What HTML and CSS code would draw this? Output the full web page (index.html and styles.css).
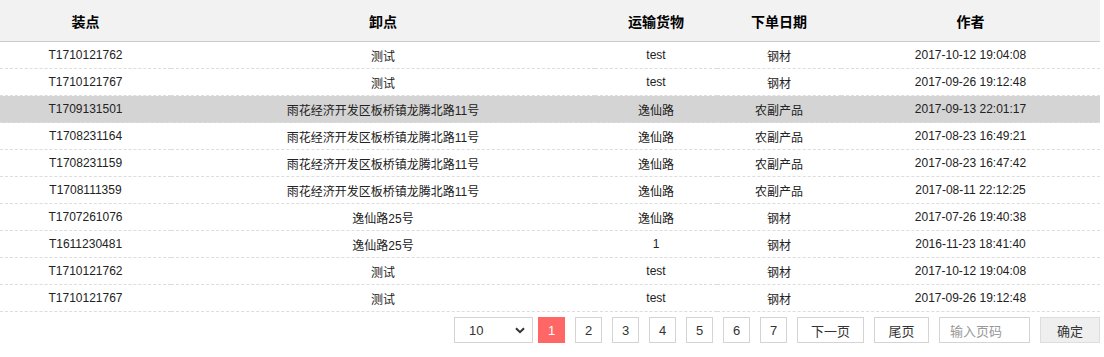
FILE: index.html
```html
<!DOCTYPE html>
<html lang="zh">
<head>
<meta charset="utf-8">
<link rel="stylesheet" href="styles.css">
</head>
<body>
<div class="wrap">
  <table class="grid">
    <colgroup>
      <col class="c1"><col class="c2"><col class="c3"><col class="c4"><col class="c5">
    </colgroup>
    <thead>
      <tr><th>装点</th><th>卸点</th><th>运输货物</th><th>下单日期</th><th>作者</th></tr>
    </thead>
    <tbody>
      <tr><td>T1710121762</td><td>测试</td><td>test</td><td>钢材</td><td>2017-10-12 19:04:08</td></tr>
      <tr><td>T1710121767</td><td>测试</td><td>test</td><td>钢材</td><td>2017-09-26 19:12:48</td></tr>
      <tr class="active"><td>T1709131501</td><td>雨花经济开发区板桥镇龙腾北路11号</td><td>逸仙路</td><td>农副产品</td><td>2017-09-13 22:01:17</td></tr>
      <tr><td>T1708231164</td><td>雨花经济开发区板桥镇龙腾北路11号</td><td>逸仙路</td><td>农副产品</td><td>2017-08-23 16:49:21</td></tr>
      <tr><td>T1708231159</td><td>雨花经济开发区板桥镇龙腾北路11号</td><td>逸仙路</td><td>农副产品</td><td>2017-08-23 16:47:42</td></tr>
      <tr><td>T1708111359</td><td>雨花经济开发区板桥镇龙腾北路11号</td><td>逸仙路</td><td>农副产品</td><td>2017-08-11 22:12:25</td></tr>
      <tr><td>T1707261076</td><td>逸仙路25号</td><td>逸仙路</td><td>钢材</td><td>2017-07-26 19:40:38</td></tr>
      <tr><td>T1611230481</td><td>逸仙路25号</td><td>1</td><td>钢材</td><td>2016-11-23 18:41:40</td></tr>
      <tr><td>T1710121762</td><td>测试</td><td>test</td><td>钢材</td><td>2017-10-12 19:04:08</td></tr>
      <tr><td>T1710121767</td><td>测试</td><td>test</td><td>钢材</td><td>2017-09-26 19:12:48</td></tr>
    </tbody>
  </table>
  <div class="pager">
    <div class="size">
      <span class="size-val">10</span>
      <svg class="chev" width="10" height="7" viewBox="0 0 10 7"><path d="M1 1.2 L5 5.2 L9 1.2" fill="none" stroke="#333" stroke-width="2"/></svg>
    </div>
    <span class="pg on">1</span>
    <span class="pg">2</span>
    <span class="pg">3</span>
    <span class="pg">4</span>
    <span class="pg">5</span>
    <span class="pg">6</span>
    <span class="pg">7</span>
    <span class="btn next">下一页</span>
    <span class="btn last">尾页</span>
    <span class="jump">输入页码</span>
    <span class="ok">确定</span>
  </div>
</div>
</body>
</html>
```
FILE: styles.css
```css
html, body {
  margin: 0;
  padding: 0;
  background: #fff;
}
body {
  font-family: "Liberation Sans", "Noto Sans CJK SC", sans-serif;
  font-size: 12px;
  color: #333;
}
.wrap {
  width: 1100px;
}
.grid {
  width: 1100px;
  border-collapse: collapse;
  table-layout: fixed;
}
.c1 { width: 171px; }
.c2 { width: 424px; }
.c3 { width: 122px; }
.c4 { width: 124px; }
.c5 { width: 259px; }
.grid th {
  height: 41px;
  padding: 0;
  background: #f2f2f2;
  border-bottom: 1px solid #cccccc;
  font-size: 14px;
  font-weight: bold;
  color: #000;
  text-align: center;
  vertical-align: middle;
}
.grid td {
  height: 26px;
  padding: 0;
  border-bottom: 1px dashed #dddddd;
  text-align: center;
  vertical-align: middle;
  color: #222;
}
.grid tr.active td {
  background: #d4d4d4;
}
.pager {
  display: flex;
  justify-content: flex-end;
  align-items: center;
  margin-top: 5px;
  gap: 10px;
}
.size {
  width: 79px;
  height: 26px;
  box-sizing: border-box;
  border: 1px solid #d4d4d4;
  display: flex;
  align-items: center;
  justify-content: space-between;
  padding: 0 7px 0 14px;
  font-size: 13px;
  margin-right: -5px;
}
.pg, .btn, .jump, .ok {
  height: 26px;
  box-sizing: border-box;
  border: 1px solid #d4d4d4;
  display: flex;
  align-items: center;
  justify-content: center;
  font-size: 13px;
  color: #333;
}
.pg {
  width: 27px;
}
.pg.on {
  background: #ff6666;
  border-color: #ff6666;
  color: #fff;
}
.next { width: 67px; }
.last { width: 55px; }
.jump {
  width: 91px;
  justify-content: flex-start;
  padding-left: 10px;
  color: #999;
}
.ok {
  width: 60px;
  background: #efefef;
  border-color: #dddddd;
}
```
